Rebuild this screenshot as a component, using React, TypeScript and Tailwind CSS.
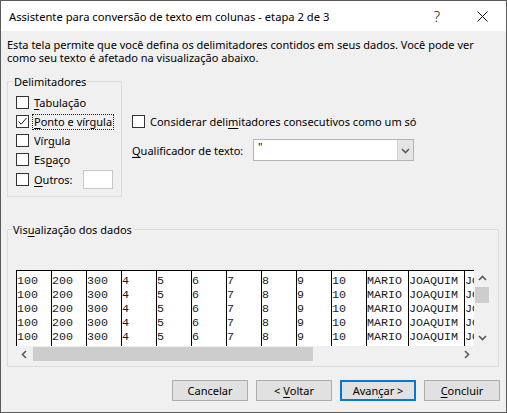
import React from "react";

const ui = { fontFamily: '"Noto Sans", "Segoe UI", sans-serif' };
const mono = { fontFamily: '"Liberation Mono", "Courier New", monospace' };

function Box({ checked = false }: { checked?: boolean }) {
  return (
    <span className="w-[13px] h-[13px] border border-[#333333] bg-white flex items-center justify-center shrink-0">
      {checked && (
        <svg width="11" height="11" viewBox="0 0 11 11">
          <polyline points="1.5,5.5 4.2,8.2 9.5,2" fill="none" stroke="#222" strokeWidth="1" />
        </svg>
      )}
    </span>
  );
}

function U({ children }: { children: React.ReactNode }) {
  return <span className="underline underline-offset-[2px]">{children}</span>;
}

function Check({
  label,
  checked,
  focus,
}: {
  label: React.ReactNode;
  checked?: boolean;
  focus?: boolean;
}) {
  return (
    <div className="h-[19px] flex items-center gap-[3px]">
      <Box checked={checked} />
      <span
        className={
          focus
            ? "border border-dotted border-[#222] px-[1px] leading-[14px] whitespace-nowrap"
            : "border border-transparent px-[1px] leading-[14px] whitespace-nowrap"
        }
      >
        {label}
      </span>
    </div>
  );
}

function Chevron({ dir }: { dir: "up" | "down" | "left" | "right" }) {
  const pts: Record<string, string> = {
    up: "1,6 4.5,2.5 8,6",
    down: "1,3 4.5,6.5 8,3",
    left: "6,1 2.5,4.5 6,8",
    right: "3,1 6.5,4.5 3,8",
  };
  return (
    <svg width="9" height="9" viewBox="0 0 9 9">
      <polyline points={pts[dir]} fill="none" stroke="#5a5a5a" strokeWidth="1.6" />
    </svg>
  );
}

const columns: { w: number; v: string }[] = [
  { w: 35, v: "100" },
  { w: 35, v: "200" },
  { w: 35, v: "300" },
  { w: 35, v: "4" },
  { w: 35, v: "5" },
  { w: 35, v: "6" },
  { w: 35, v: "7" },
  { w: 35, v: "8" },
  { w: 35, v: "9" },
  { w: 35, v: "10" },
  { w: 42, v: "MARIO" },
  { w: 56, v: "JOAQUIM" },
  { w: 10, v: "JO" },
];

function Preview() {
  return (
    <div className="w-[474px] h-[92px] flex flex-col bg-white">
      <div className="flex h-[76px]">
        <div className="w-[458px] flex border-t border-black overflow-hidden">
          {columns.map((c, i) => (
            <div
              key={i}
              className="shrink-0 border-l border-black pt-[3px] overflow-hidden text-[#1a1a1a]"
              style={{ width: c.w, ...mono }}
            >
              {[0, 1, 2, 3, 4].map((r) => (
                <div key={r} className="h-[14px] leading-[14px] text-[11.66px] whitespace-pre">
                  {c.v}
                </div>
              ))}
            </div>
          ))}
        </div>
        <div className="w-[16px] bg-[#f0f0f0] flex flex-col items-center">
          <div className="h-[17px] flex items-center justify-center">
            <Chevron dir="up" />
          </div>
          <div className="w-[14px] h-[16px] bg-[#cdcdcd]" />
          <div className="flex-1" />
          <div className="h-[17px] flex items-center justify-center">
            <Chevron dir="down" />
          </div>
        </div>
      </div>
      <div className="flex h-[16px] bg-[#f0f0f0]">
        <div className="w-[17px] flex items-center justify-center">
          <Chevron dir="left" />
        </div>
        <div className="w-[425px] flex items-center">
          <div className="w-[280px] h-[14px] bg-[#cdcdcd]" />
        </div>
        <div className="w-[16px] flex items-center justify-center">
          <Chevron dir="right" />
        </div>
        <div className="w-[16px]" />
      </div>
    </div>
  );
}

function Btn({ children, primary }: { children: React.ReactNode; primary?: boolean }) {
  return (
    <div
      className={
        primary
          ? "w-[76px] h-[21px] bg-[#e1e1e1] border-2 border-[#0078d7] flex items-center justify-center leading-[14px] whitespace-pre"
          : "w-[76px] h-[21px] bg-[#e1e1e1] border border-[#adadad] flex items-center justify-center leading-[14px] whitespace-pre"
      }
    >
      {children}
    </div>
  );
}

export default function App() {
  return (
    <div
      className="w-[507px] h-[413px] border border-[#5a5a5a] bg-[#f0f0f0] flex flex-col text-[11px] leading-[13px] text-black overflow-hidden"
      style={ui}
    >
      {/* title bar */}
      <div className="h-[30px] bg-white flex items-center pl-[8px] shrink-0">
        <span className="flex-1 whitespace-nowrap text-[11.2px]">
          Assistente para conversão de texto em colunas - etapa 2 de 3
        </span>
        <span className="w-[20px] text-center text-[15px] font-light text-[#222] mr-[25px]">?</span>
        <span className="w-[20px] flex items-center justify-center mr-[14px]">
          <svg width="11" height="11" viewBox="0 0 11 11">
            <path d="M0.5 0.5 L10.5 10.5 M10.5 0.5 L0.5 10.5" stroke="#111" strokeWidth="1" />
          </svg>
        </span>
      </div>

      {/* body */}
      <div className="flex-1 flex flex-col pl-[6px] pr-[6px] pt-[7px]">
        <p className="leading-[13px] whitespace-nowrap">
          Esta tela permite que você defina os delimitadores contidos em seus dados. Você pode ver
          <br />
          como seu texto é afetado na visualização abaixo.
        </p>

        <div className="flex mt-[11px]">
          <fieldset className="w-[115px] h-[122px] border border-[#dcdcdc]">
            <legend className="ml-[5px] px-[1px] leading-[13px]">Delimitadores</legend>
            <div className="mt-[5px] ml-[8px] flex flex-col">
              <Check label={<><U>T</U>abulação</>} />
              <Check label={<><U>P</U>onto e vírgula</>} checked focus />
              <Check label={<>Vír<U>g</U>ula</>} />
              <Check label={<>Es<U>p</U>aço</>} />
              <div className="h-[21px] flex items-center gap-[3px]">
                <Box />
                <span className="px-[2px] w-[48px] whitespace-nowrap">
                  <U>O</U>utros:
                </span>
                <span className="w-[30px] h-[19px] bg-white border border-[#c8c8c8]" />
              </div>
            </div>
          </fieldset>

          <div className="ml-[10px] pt-[39px] flex flex-col">
            <div className="h-[14px] flex items-center gap-[5px]">
              <Box />
              <span className="whitespace-nowrap">
                Considerar deli<U>m</U>itadores consecutivos como um só
              </span>
            </div>
            <div className="mt-[11px] flex items-center">
              <span className="w-[121px] whitespace-nowrap">
                <U>Q</U>ualificador de texto:
              </span>
              <div className="w-[161px] h-[22px] bg-white border border-[#b4b4b4] flex">
                <span className="flex-1 pl-[4px] leading-[14px] text-[11px]">"</span>
                <div className="w-[16px] bg-[#e5e5e5] border-l border-[#cfcfcf] flex items-center justify-center">
                  <Chevron dir="down" />
                </div>
              </div>
            </div>
          </div>
        </div>

        <fieldset className="mt-[26px] w-[492px] border border-[#dcdcdc] pb-[4px]">
          <legend className="ml-[4px] px-[1px] leading-[13px]">
            Vis<U>u</U>alização dos dados
          </legend>
          <div className="mt-[34px] ml-[8px]">
            <Preview />
          </div>
        </fieldset>

        <div className="mt-[13px] flex justify-end gap-[8px]">
          <Btn>Cancelar</Btn>
          <Btn>
            {"< "}
            <U>V</U>oltar
          </Btn>
          <Btn primary>
            Avan<U>ç</U>ar{" >"}
          </Btn>
          <Btn>
            <U>C</U>oncluir
          </Btn>
        </div>
      </div>
    </div>
  );
}
